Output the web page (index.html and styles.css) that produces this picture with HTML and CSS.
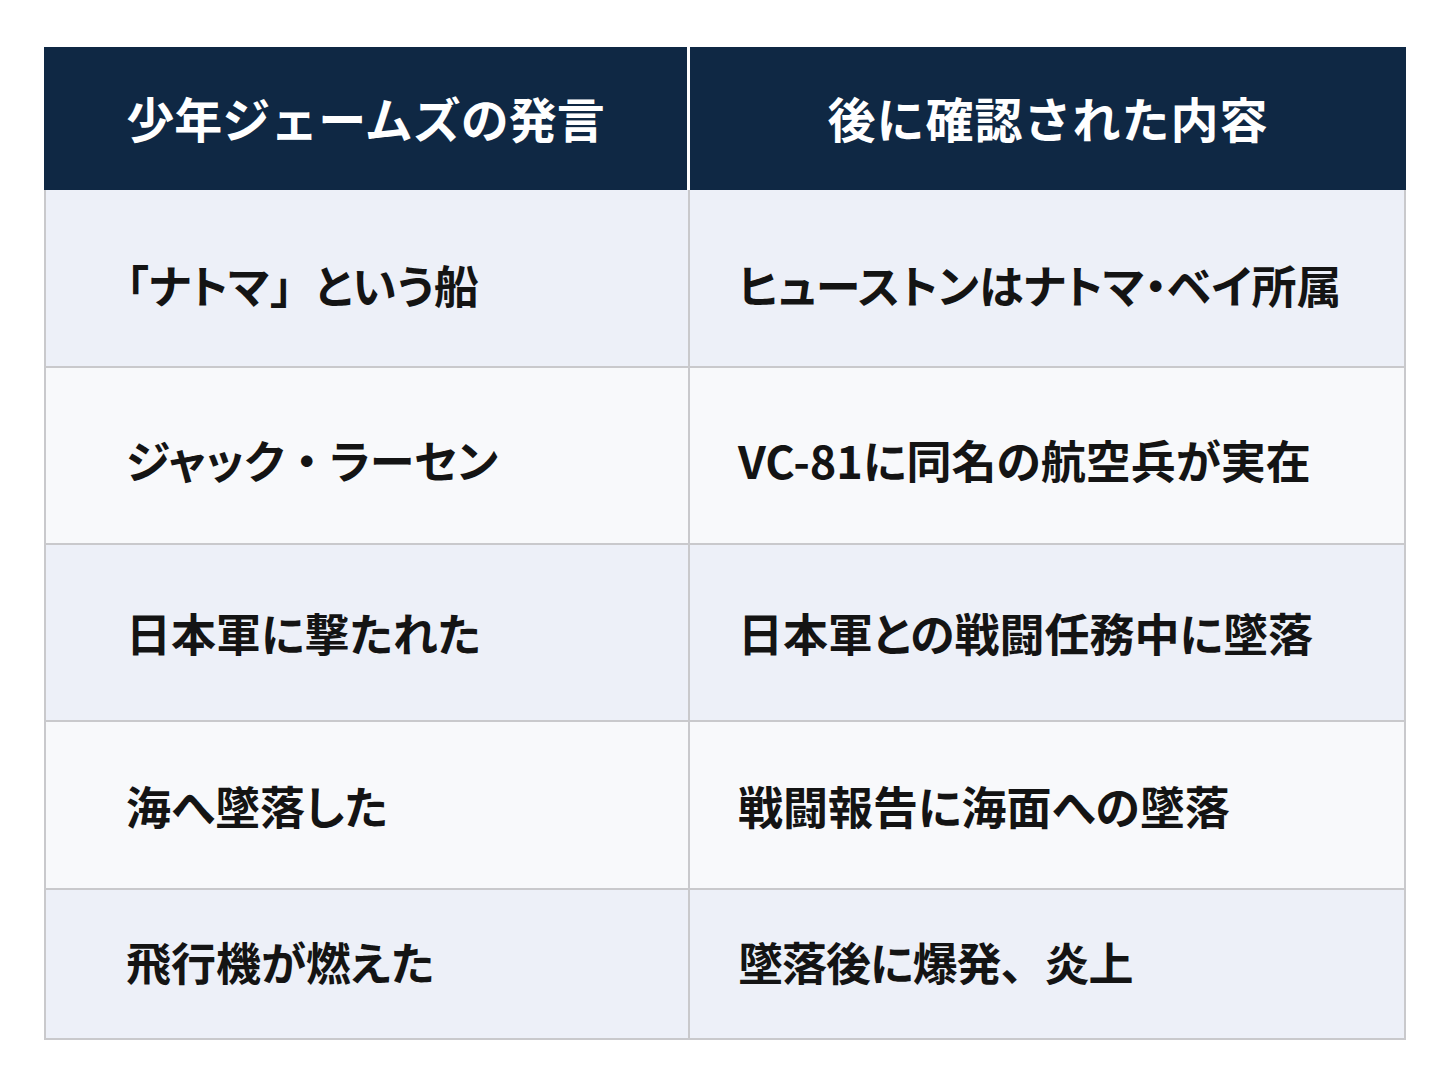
FILE: index.html
```html
<!DOCTYPE html>
<html lang="ja">
<head>
<meta charset="utf-8">
<link rel="stylesheet" href="styles.css">
</head>
<body>
<div class="page">
  <div class="table">
    <div class="cell head left">少年ジェームズの発言</div>
    <div class="cell head right">後に確認された内容</div>

    <div class="cell odd left r1">「ナトマ<span class="fw">」</span>という船</div>
    <div class="cell odd right r1">ヒューストンはナトマ・ベイ所属</div>

    <div class="cell even left r2">ジャック<span class="fw">・</span>ラーセン</div>
    <div class="cell even right r2">VC-81に同名の航空兵が実在</div>

    <div class="cell odd left">日本軍に撃たれた</div>
    <div class="cell odd right">日本軍との戦闘任務中に墜落</div>

    <div class="cell even left">海へ墜落した</div>
    <div class="cell even right">戦闘報告に海面への墜落</div>

    <div class="cell odd left last">飛行機が燃えた</div>
    <div class="cell odd right last r5">墜落後に爆発<span class="fw">、</span>炎上</div>
  </div>
</div>
</body>
</html>
```
FILE: styles.css
```css
html, body {
  margin: 0;
  padding: 0;
  background: #ffffff;
}
body {
  font-family: "Noto Sans CJK JP", "Noto Sans", sans-serif;
  color: #141414;
}
.page {
  padding: 47px 0 0 44px;
}
.table {
  width: 1362px;
  display: grid;
  grid-template-columns: 644px 714px;
  grid-template-rows: 143px 178px 177px 177px 168px 148px;
  border-left: 2px solid #c9c9cc;
  border-right: 2px solid #c9c9cc;
  border-bottom: 2px solid #c9c9cc;
  box-sizing: border-box;
}
.cell {
  display: flex;
  align-items: center;
  font-weight: 700;
  font-size: 45px;
  line-height: 1;
  white-space: nowrap;
  box-sizing: border-box;
  border-bottom: 2px solid #c9c9cc;
  font-feature-settings: "palt";
}
.fw {
  font-feature-settings: normal;
}
.cell.last {
  border-bottom: none;
  padding-bottom: 6px;
}
.cell.left {
  padding-left: 80px;
  border-right: 2px solid #c9c9cc;
}
.cell.right {
  padding-left: 48px;
}
.cell.head {
  background: #0f2844;
  color: #ffffff;
  font-size: 48px;
  font-feature-settings: normal;
  justify-content: center;
  padding-left: 0;
  border-bottom: none;
  padding-bottom: 4px;
}
.cell.head.left {
  border-right: 3px solid #ffffff;
  margin-left: -2px;
}
.cell.head.right {
  margin-right: -2px;
  letter-spacing: 1px;
}
.cell.odd {
  background: #edf0f8;
}
.cell.even {
  background: #f8f9fb;
}
.cell.r1 {
  padding-top: 12px;
}
.cell.r2 {
  padding-top: 8px;
}
.cell.r5 {
  letter-spacing: -1px;
}
```
